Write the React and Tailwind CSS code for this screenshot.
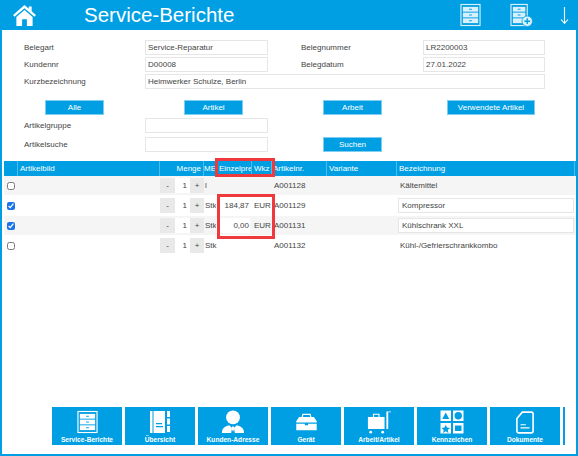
import React from 'react';

function Cabinet({ className }) {
  return (
    <svg viewBox="0 0 22 24" className={className} fill="none" stroke="currentColor">
      <rect x="1" y="1" width="20" height="22" strokeWidth="1.2" />
      <rect x="3" y="3.5" width="16" height="5" fill="currentColor" stroke="none" />
      <rect x="3" y="9.5" width="16" height="5" fill="currentColor" stroke="none" />
      <rect x="3" y="15.5" width="16" height="5" fill="currentColor" stroke="none" />
      <path d="M9.5 6h3M9.5 12h3M9.5 18h3" stroke="#009fe3" strokeWidth="1" />
    </svg>
  );
}

function CabinetPlus({ className }) {
  return (
    <svg viewBox="0 0 24 24" className={className} fill="none" stroke="currentColor">
      <rect x="1" y="1" width="17" height="22" strokeWidth="1.2" />
      <rect x="3" y="3.5" width="13" height="5" fill="currentColor" stroke="none" />
      <rect x="3" y="9.5" width="13" height="5" fill="currentColor" stroke="none" />
      <rect x="3" y="15.5" width="13" height="5" fill="currentColor" stroke="none" />
      <path d="M8 6h3M8 12h3" stroke="#009fe3" strokeWidth="1" />
      <circle cx="18" cy="18.5" r="5.5" fill="currentColor" stroke="#009fe3" strokeWidth="0.8" />
      <path d="M18 15.5v6M15 18.5h6" stroke="#009fe3" strokeWidth="1.4" />
    </svg>
  );
}

function HomeIcon() {
  return (
    <svg viewBox="0 0 24 22" className="w-[23px] h-[21px]" fill="white">
      <path d="M12 0 L0 10.5 L1.6 12.4 L12 3.4 L22.4 12.4 L24 10.5 L19.5 6.6 V1.5 H16.5 V4 Z" />
      <path d="M12 5.2 L3.5 12.6 V22 H9.5 V15 H14.5 V22 H20.5 V12.6 Z" />
    </svg>
  );
}

function ArrowDown() {
  return (
    <svg viewBox="0 0 9 17" className="w-[9px] h-[17px]" fill="none" stroke="white" strokeWidth="1.1">
      <path d="M4.5 0v16M1 12.5l3.5 3.8 3.5-3.8" />
    </svg>
  );
}

function Notebook() {
  return (
    <svg viewBox="0 0 24 24" className="w-[24px] h-[24px]" fill="white">
      <rect x="2" y="1" width="2.5" height="22" />
      <path fillRule="evenodd" d="M5.5 1H17V23H5.5Z M8 13h6v1.2H8Z M8 16h7v1.2H8Z" />
      <rect x="19" y="1" width="3" height="6" />
      <rect x="19" y="8.5" width="3" height="6" />
      <rect x="19" y="16" width="3" height="6" />
    </svg>
  );
}

function Person() {
  return (
    <svg viewBox="0 0 26 26" className="w-[24px] h-[24px]" fill="white">
      <circle cx="13" cy="8" r="7.5" />
      <path d="M1 25c0-5 3-7.5 8-8.5l3 3-1 5.500zM25 25c0-5-3-7.500-8-8.500l-3 3 1 5.500z" />
      <path d="M12 18h2l.5 2-1.500 3.500-1.500-3.500z" />
    </svg>
  );
}

function Toolbox() {
  return (
    <svg viewBox="0 0 26 22" className="w-[25px] h-[18px]" fill="white">
      <path fillRule="evenodd" d="M8 1h10l1 4h-1.500l-.6-2.500H9.100L8.500 5H7z" />
      <path d="M4 5h18l3.500 5v1.500H.5V10z" />
      <path d="M.5 13h10.500v2h4v-2h10.500v8H.5z" />
    </svg>
  );
}

function Cart() {
  return (
    <svg viewBox="0 0 26 24" className="w-[24px] h-[23px]" fill="white">
      <rect x="1" y="6" width="18" height="13" />
      <path d="M7 6V3h6v3" fill="none" stroke="white" strokeWidth="1.200" />
      <path d="M26 1h-3v18h-2V0h5z" />
      <circle cx="4" cy="22.500" r="1.500" />
      <circle cx="17" cy="22.500" r="1.500" />
    </svg>
  );
}

function Shapes() {
  return (
    <svg viewBox="0 0 24 24" className="w-[24px] h-[24px]">
      <rect x="0.500" y="0.500" width="10.500" height="10.500" fill="white" />
      <rect x="13" y="0.500" width="10.500" height="10.500" fill="white" />
      <rect x="0.500" y="13" width="10.500" height="10.500" fill="white" />
      <rect x="13" y="13" width="10.500" height="10.500" fill="white" />
      <path d="M5.750 2.500l3.500 6.500h-7z" fill="#009fe3" />
      <circle cx="18.250" cy="5.750" r="3.700" fill="#009fe3" />
      <path d="M5.750 14.800l1.300 2.800 3 .3-2.300 2 .7 3-2.700-1.600-2.700 1.600.7-3-2.300-2 3-.3z" fill="#009fe3" />
      <rect x="15" y="15.500" width="6.500" height="5.500" fill="#009fe3" />
    </svg>
  );
}

function Doc() {
  return (
    <svg viewBox="0 0 20 25" className="w-[18px] h-[25px]" fill="none" stroke="white" strokeWidth="1.800">
      <path d="M7 1h10a2 2 0 0 1 2 2v19a2 2 0 0 1-2 2H3a2 2 0 0 1-2-2V8z" />
      <path d="M5 15h6M5 18.500h10" strokeWidth="1.300" />
    </svg>
  );
}

function Field({ value = '', className = 'w-[123px]' }) {
  return (
    <div className={`h-[15px] border border-[#e6e6e6] bg-white px-[2px] leading-[13px] text-[#444] ${className}`}>
      {value}
    </div>
  );
}

function BlueButton({ label, className = 'w-[59px]' }) {
  return (
    <button className={`h-[15px] bg-[#009fe3] border border-[#7fcdf0] text-white text-[8px] leading-[12px] ${className}`}>
      {label}
    </button>
  );
}

const gridCols = 'grid grid-cols-[14px_142px_44px_12px_36px_20px_55px_70px_178px]';

function Stepper() {
  return (
    <div className="flex h-[15px] items-center text-[#444] bg-[#e9e9e9] leading-[15px]">
      <span className="w-[15px] text-center">-</span>
      <span className="w-[15px] h-full bg-white text-right pr-[3px]">1</span>
      <span className="w-[14px] text-center">+</span>
    </div>
  );
}

const rows = [
  { nr: 'A001128', name: 'Kältemittel', unit: 'l', checked: false },
  { nr: 'A001129', name: 'Kompressor', unit: 'Stk', price: '184,87', cur: 'EUR', checked: true, edit: true },
  { nr: 'A001131', name: 'Kühlschrank XXL', unit: 'Stk', price: '0,00', cur: 'EUR', checked: true, edit: true },
  { nr: 'A001132', name: 'Kühl-/Gefrierschrankkombo', unit: 'Stk', checked: false },
];

const tools = [
  { label: 'Service-Berichte', icon: <Cabinet className="w-[21px] h-[24px] text-white" /> },
  { label: 'Übersicht', icon: <Notebook /> },
  { label: 'Kunden-Adresse', icon: <Person /> },
  { label: 'Gerät', icon: <Toolbox /> },
  { label: 'Arbeit/Artikel', icon: <Cart /> },
  { label: 'Kennzeichen', icon: <Shapes /> },
  { label: 'Dokumente', icon: <Doc /> },
];

export default function App() {
  return (
    <div className="relative w-[578px] h-[456px] flex flex-col bg-white border-x-2 border-b-2 border-[#009fe3] text-[8px] text-[#444] font-['Liberation_Sans',Arial,sans-serif] overflow-hidden">
      <header className="h-[30px] -mx-[2px] shrink-0 flex items-center bg-[#009fe3] text-white">
        <div className="ml-[13px]"><HomeIcon /></div>
        <h1 className="ml-[48px] text-[20.5px] leading-none">Service-Berichte</h1>
        <div className="ml-auto flex items-center">
          <Cabinet className="w-[21px] h-[24px] text-[#d8f0fb]" />
          <div className="ml-[29px]"><CabinetPlus className="w-[23px] h-[24px] text-[#d8f0fb]" /></div>
          <div className="ml-[27px] mr-[9px]"><ArrowDown /></div>
        </div>
      </header>

      <section className="pt-[10px] pl-[22px] flex flex-col gap-[2px]">
        <div className="flex items-center">
          <span className="w-[121px]">Belegart</span>
          <Field value="Service-Reparatur" />
          <span className="ml-[33px] w-[122px]">Belegnummer</span>
          <Field value="LR2200003" className="w-[122px]" />
        </div>
        <div className="flex items-center">
          <span className="w-[121px]">Kundennr</span>
          <Field value="D00008" />
          <span className="ml-[33px] w-[122px]">Belegdatum</span>
          <Field value="27.01.2022" className="w-[122px]" />
        </div>
        <div className="flex items-center">
          <span className="w-[121px]">Kurzbezeichnung</span>
          <Field value="Heimwerker Schulze, Berlin" className="w-[400px]" />
        </div>
      </section>

      <div className="mt-[11px] flex">
        <BlueButton label="Alle" className="ml-[43px] w-[59px]" />
        <BlueButton label="Artikel" className="ml-[80px] w-[59px]" />
        <BlueButton label="Arbeit" className="ml-[80px] w-[59px]" />
        <BlueButton label="Verwendete Artikel" className="ml-[65px] w-[88px]" />
      </div>

      <section className="mt-[3px] pl-[22px] flex flex-col gap-[4px]">
        <div className="flex items-center">
          <span className="w-[121px]">Artikelgruppe</span>
          <Field />
        </div>
        <div className="flex items-center">
          <span className="w-[121px]">Artikelsuche</span>
          <Field />
          <BlueButton label="Suchen" className="ml-[55px] w-[59px]" />
        </div>
      </section>

      <div className="mt-[9px] ml-[2px] -mr-[2px]">
        <div className={`${gridCols} h-[15px] bg-[#009fe3] text-white leading-[15px] [&>div]:border-r [&>div]:border-[#4dbcec] [&>div]:px-[2px] [&>div]:whitespace-nowrap [&>div]:overflow-hidden`}>
          <div></div>
          <div>Artikelbild</div>
          <div className="text-right">Menge</div>
          <div className="!px-0">ME</div>
          <div className="!pl-[3px] !pr-0">Einzelpreis</div>
          <div>Wkz</div>
          <div className="!px-[1px]">Artikelnr.</div>
          <div>Variante</div>
          <div>Bezeichnung</div>
        </div>
        {rows.map((row, i) => (
          <div key={row.nr} className={`${gridCols} h-[20px] items-center ${i % 2 === 0 ? 'bg-[#f5f5f5]' : 'bg-white'} border-b border-white`}>
            <div className="pl-[3px] flex items-center">
              <input type="checkbox" defaultChecked={row.checked} className="w-[8px] h-[8px] accent-[#1a73e8]" />
            </div>
            <div></div>
            <Stepper />
            <div className="pl-[1px] whitespace-nowrap overflow-visible">{row.unit}</div>
            <div className="text-right pr-[2px]">
              {row.price && <div className="bg-white h-[15px] leading-[15px] pr-[1px]">{row.price}</div>}
            </div>
            <div className="pl-[2px]">{row.cur}</div>
            <div className="pl-[2px]">{row.nr}</div>
            <div></div>
            <div className="pl-[3px]">
              {row.edit ? <Field value={row.name} className="w-[176px] !px-[3px] -ml-[2px]" /> : row.name}
            </div>
          </div>
        ))}
      </div>

      <nav className="mt-auto mb-[9px] pl-[50px] flex gap-[3px] overflow-hidden">
        {tools.map((t) => (
          <div key={t.label} className="w-[70px] h-[38px] shrink-0 bg-[#009fe3] text-white flex flex-col items-center justify-between pt-[2px] pb-[1px]">
            <div className="h-[26px] flex items-center">{t.icon}</div>
            <span className="text-[6.6px] leading-[8px] font-bold whitespace-nowrap">{t.label}</span>
          </div>
        ))}
        <div className="w-[2px] h-[38px] shrink-0 bg-[#009fe3]" />
      </nav>

      <div className="absolute left-[213px] top-[158px] w-[60px] h-[19px] border-[3px] border-[#f0393c]" />
      <div className="absolute left-[215px] top-[194px] w-[58px] h-[45px] border-[3px] border-[#f0393c]" />
    </div>
  );
}
